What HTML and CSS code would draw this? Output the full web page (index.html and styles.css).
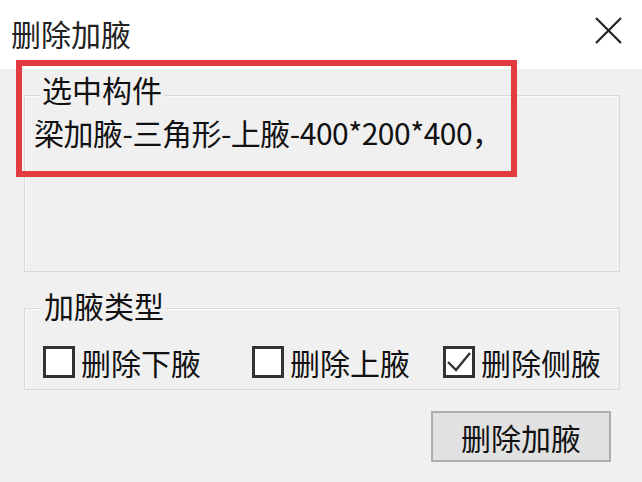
FILE: index.html
```html
<!DOCTYPE html>
<html lang="zh-CN">
<head>
<meta charset="utf-8">
<title>删除加腋</title>
<link rel="stylesheet" href="styles.css">
</head>
<body>
<div class="dialog">
  <header class="titlebar">
    <span class="title">删除加腋</span>
    <svg class="close" width="27" height="27" viewBox="0 0 27 27" aria-hidden="true">
      <path d="M1 1 L26 26 M26 1 L1 26" stroke="#222" stroke-width="2.2" fill="none"/>
    </svg>
  </header>
  <main class="content">
    <section class="group g1">
      <div class="legend">选中构件</div>
      <div class="value">梁加腋-三角形-上腋-400*200*400，</div>
    </section>
    <section class="group g2">
      <div class="legend">加腋类型</div>
      <div class="checks">
        <label class="check c1"><span class="box"></span><span class="text">删除下腋</span></label>
        <label class="check c2"><span class="box"></span><span class="text">删除上腋</span></label>
        <label class="check c3"><span class="box checked"><svg width="26" height="26" viewBox="0 0 26 26" aria-hidden="true"><path d="M2 13 L10 21 L24 4" stroke="#333" stroke-width="2.4" fill="none"/></svg></span><span class="text">删除侧腋</span></label>
      </div>
    </section>
    <div class="actions">
      <button class="btn" type="button">删除加腋</button>
    </div>
  </main>
  <div class="highlight"></div>
</div>
</body>
</html>
```

FILE: styles.css
```css
* { box-sizing: border-box; }
html, body {
  margin: 0;
  padding: 0;
  background: #f0f0f0;
}
body {
  font-family: "Noto Sans CJK SC", "Noto Sans", sans-serif;
  color: #111;
  font-size: 30px;
  line-height: 30px;
}
.dialog {
  position: relative;
  width: 642px;
  height: 482px;
  overflow: hidden;
  background: #f0f0f0;
}
.titlebar {
  height: 69px;
  background: #ffffff;
  display: flex;
  align-items: flex-start;
  padding: 18px 20px 0 11px;
}
.title {
  font-size: 30px;
  line-height: 30px;
  color: #222;
}
.close {
  margin-left: auto;
  margin-top: -1px;
}
.content {
  padding: 0 22px 0 24px;
}
.group {
  border: 1px solid #d9d9d9;
  box-shadow: inset 1px 1px 0 #fafafa;
}
.g1 {
  margin-top: 26px;
  height: 177px;
}
.legend {
  display: block;
  width: fit-content;
  background: #f0f0f0;
  padding: 0 2px;
  height: 30px;
}
.g1 .legend {
  margin-top: -22px;
  margin-left: 15px;
}
.value {
  margin-top: 13px;
  margin-left: 9px;
  white-space: nowrap;
  letter-spacing: -0.5px;
}
.g2 {
  margin-top: 36px;
  height: 82px;
}
.g2 .legend {
  margin-top: -19px;
  margin-left: 17px;
}
.checks {
  display: grid;
  grid-template-columns: 209px 191px auto;
  margin-top: 26px;
  margin-left: 18px;
  height: 32px;
}
.check {
  display: flex;
  align-items: center;
  gap: 6px;
}
.box {
  width: 32px;
  height: 32px;
  border: 3px solid #333;
  background: #fff;
  display: flex;
  align-items: center;
  justify-content: center;
}
.text {
  line-height: 30px;
}
.actions {
  display: flex;
  justify-content: flex-end;
  margin-top: 21px;
  padding-right: 9px;
}
.btn {
  width: 180px;
  height: 51px;
  background: #e1e1e1;
  border: 2px solid #adadad;
  font-family: inherit;
  font-size: 30px;
  line-height: 30px;
  color: #111;
  padding: 0;
}
.highlight {
  position: absolute;
  left: 16px;
  top: 60px;
  width: 501px;
  height: 117px;
  border: 6px solid #e23b40;
  pointer-events: none;
}
```
